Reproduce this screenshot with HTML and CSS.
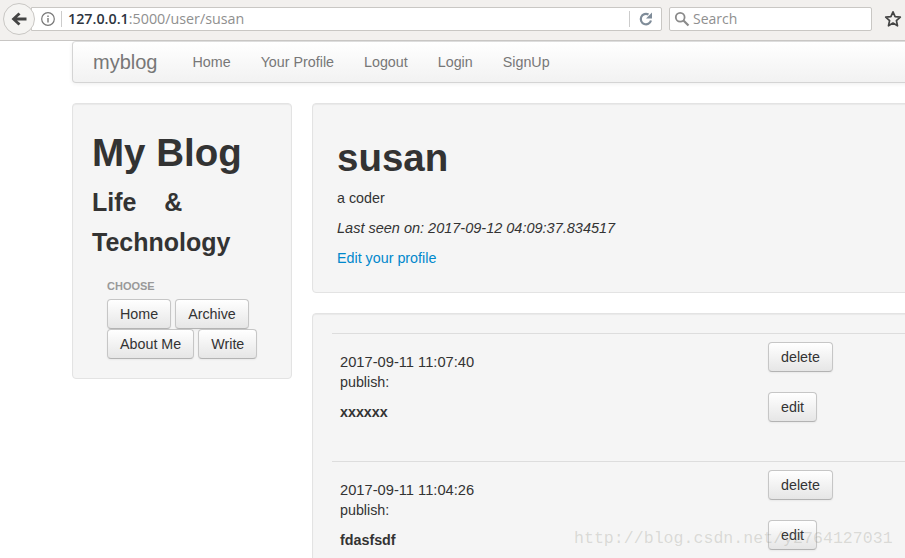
FILE: index.html
```html
<!DOCTYPE html>
<html lang="en">
<head>
<meta charset="utf-8">
<title>susan</title>
<link rel="stylesheet" href="styles.css">
</head>
<body>
<header class="chrome">
  <button class="back" aria-label="Back">
    <svg width="20" height="20" viewBox="0 0 20 20"><path d="M2.5 10 9.5 3.5 11.5 5.5 8 8.5H17.5V11.5H8L11.5 14.5 9.5 16.5Z" fill="#444"/></svg>
  </button>
  <div class="urlbar">
    <svg class="info" width="16" height="16" viewBox="0 0 16 16"><circle cx="8" cy="8" r="6.3" fill="none" stroke="#777" stroke-width="1.2"/><rect x="7.3" y="7" width="1.4" height="4.5" fill="#777"/><rect x="7.3" y="4.5" width="1.4" height="1.5" fill="#777"/></svg>
    <span class="sep"></span>
    <span class="url"><b>127.0.0.1</b>:5000/user/susan</span>
    <span class="sep sep-right"></span>
    <svg class="reload" width="16" height="16" viewBox="0 0 16 16"><path d="M13 9.5A5.2 5.2 0 1 1 10.5 3.5" fill="none" stroke="#7f8c99" stroke-width="2.2"/><path d="M14 1.5V7.5H8Z" fill="#7f8c99"/></svg>
  </div>
  <div class="searchbar">
    <svg width="16" height="16" viewBox="0 0 16 16"><circle cx="6.2" cy="6.2" r="4.4" fill="none" stroke="#8a8a8a" stroke-width="1.8"/><path d="M9.5 9.5 14.5 14.5" stroke="#8a8a8a" stroke-width="2.2"/></svg>
    <span>Search</span>
  </div>
  <svg class="star" width="18" height="18" viewBox="0 0 18 18"><path d="M9 1.8 11.1 6.6 16.3 7.1 12.4 10.6 13.5 15.8 9 13.1 4.5 15.8 5.6 10.6 1.7 7.1 6.9 6.6Z" fill="none" stroke="#444" stroke-width="1.7" stroke-linejoin="round"/></svg>
</header>

<div class="page">
  <nav class="navbar">
    <a class="brand" href="#">myblog</a>
    <a href="#">Home</a>
    <a href="#">Your Profile</a>
    <a href="#">Logout</a>
    <a href="#">Login</a>
    <a href="#">SignUp</a>
  </nav>

  <div class="columns">
    <aside class="well sidebar">
      <h1>My Blog</h1>
      <h3>Life &nbsp;&nbsp; &amp; Technology</h3>
      <div class="choose">
        <div class="nav-header">CHOOSE</div>
        <div class="btn-row">
          <a class="btn" href="#">Home</a>
          <a class="btn" href="#">Archive</a>
          <a class="btn" href="#">About Me</a>
          <a class="btn" href="#">Write</a>
        </div>
      </div>
    </aside>

    <main class="content">
      <section class="well profile">
        <h1>susan</h1>
        <p>a coder</p>
        <p class="seen"><em>Last seen on: 2017-09-12 04:09:37.834517</em></p>
        <p><a href="#">Edit your profile</a></p>
      </section>

      <section class="well posts">
        <article class="post">
          <div class="post-text">
            <div class="stamp">2017-09-11 11:07:40</div>
            <div>publish:</div>
            <p class="title">xxxxxx</p>
          </div>
          <div class="post-actions">
            <a class="btn" href="#">delete</a>
            <a class="btn" href="#">edit</a>
          </div>
        </article>
        <article class="post">
          <div class="post-text">
            <div class="stamp">2017-09-11 11:04:26</div>
            <div>publish:</div>
            <p class="title">fdasfsdf</p>
          </div>
          <div class="post-actions">
            <a class="btn" href="#">delete</a>
            <a class="btn" href="#">edit</a>
          </div>
        </article>
      </section>
    </main>
  </div>
</div>

<div class="watermark">http://blog.csdn.net/y2764127031</div>
</body>
</html>
```

FILE: styles.css
```css
* { box-sizing: border-box; }

html, body {
  height: 100%;
  overflow: hidden;
}

body {
  margin: 0;
  background: #fff;
  color: #333;
  font-family: "Liberation Sans", Arial, sans-serif;
  font-size: 14.3px;
  line-height: 20px;
}

a { text-decoration: none; }

.chrome {
  height: 41px;
  background: #f2f0ee;
  border-bottom: 1px solid #c8c6c4;
  display: flex;
  align-items: center;
  padding: 0 0 2px 3px;
  position: relative;
}

.back {
  width: 32px;
  height: 32px;
  border-radius: 50%;
  border: 1px solid #c9c7c4;
  background: #f5f4f2;
  padding: 0;
  display: flex;
  align-items: center;
  justify-content: center;
  z-index: 1;
  flex: none;
}

.urlbar {
  width: 631px;
  height: 24px;
  margin-left: -4px;
  background: #fff;
  border: 1px solid #c9c7c4;
  border-radius: 0 2px 2px 0;
  display: flex;
  align-items: center;
  padding-left: 8px;
  flex: none;
}

.info { flex: none; }

.sep {
  width: 1px;
  height: 16px;
  background: #ccc;
  margin: 0 6px 0 5px;
  flex: none;
}

.sep-right { margin: 0 8px 0 auto; }

.url {
  font-family: "Open Sans", "Noto Sans", sans-serif;
  font-size: 14.3px;
  color: #8f8f8f;
  white-space: nowrap;
}

.url b { font-weight: 600; color: #2c3440; }

.reload { margin-right: 7px; flex: none; }

.searchbar {
  width: 203px;
  height: 24px;
  margin-left: 7px;
  background: #fff;
  border: 1px solid #c9c7c4;
  border-radius: 2px;
  display: flex;
  align-items: center;
  gap: 3px;
  padding-left: 4px;
  font-family: "Open Sans", "Noto Sans", sans-serif;
  font-size: 14px;
  color: #8f8f8f;
  flex: none;
}

.star { margin-left: 12px; flex: none; }

.page {
  width: 1000px;
  margin-left: 72px;
}

.navbar {
  height: 42px;
  display: flex;
  align-items: center;
  padding-left: 20px;
  background: linear-gradient(#fff, #f2f2f2);
  border: 1px solid #d4d4d4;
  border-top-color: #ddd;
  border-radius: 4px;
  box-shadow: 0 1px 4px rgba(0, 0, 0, .065);
  gap: 30px;
  color: #777;
}

.navbar a { color: #777; white-space: nowrap; }

.navbar .brand {
  font-size: 20px;
  margin-right: 5px;
}

.columns {
  display: flex;
  align-items: flex-start;
  gap: 20px;
  margin-top: 20px;
}

.well {
  background: #f5f5f5;
  border: 1px solid #e3e3e3;
  border-radius: 4px;
  box-shadow: inset 0 1px 1px rgba(0, 0, 0, .05);
}

.sidebar {
  width: 220px;
  height: 276px;
  padding: 19px;
  flex: none;
}

.sidebar h1 {
  margin: 10px 0 0;
  font-size: 38.5px;
  line-height: 40px;
  font-weight: 700;
}

.sidebar h3 {
  margin: 9px 0 0;
  font-size: 25px;
  line-height: 40px;
  font-weight: 700;
}

.choose {
  margin-top: 14px;
  padding-left: 15px;
}

.nav-header {
  font-size: 11px;
  line-height: 20px;
  font-weight: 700;
  color: #999;
}

.btn-row {
  display: flex;
  flex-wrap: wrap;
  column-gap: 4px;
  margin-top: 3px;
}

.btn {
  display: inline-block;
  padding: 4px 12px;
  height: 30px;
  color: #333;
  background: linear-gradient(#fff, #e6e6e6);
  border: 1px solid #c6c6c6;
  border-bottom-color: #b3b3b3;
  border-radius: 4px;
  box-shadow: inset 0 1px 0 rgba(255, 255, 255, .2), 0 1px 2px rgba(0, 0, 0, .05);
  white-space: nowrap;
}

.content {
  width: 668px;
  flex: none;
}

.profile {
  height: 190px;
  padding: 29px 24px;
}

.profile h1 {
  margin: 0 0 6px;
  font-size: 38.5px;
  line-height: 49px;
  font-weight: 700;
}

.profile p { margin: 0 0 10px; }

.profile .seen { font-size: 14.5px; }

.profile a { color: #08c; }

.posts {
  margin-top: 20px;
  padding: 19px 19px 0;
}

.post {
  height: 128px;
  border-top: 1px solid #ddd;
  display: flex;
  padding: 8px 0 0 8px;
}

.post-text {
  width: 428px;
  padding-top: 10px;
}

.stamp { font-size: 14.7px; }

.title {
  margin: 10px 0 0;
  font-weight: 700;
}

.post-actions {
  display: flex;
  flex-direction: column;
  align-items: flex-start;
  gap: 20px;
}

.watermark {
  position: absolute;
  left: 574px;
  top: 529px;
  font-family: "Liberation Mono", monospace;
  font-size: 16.6px;
  line-height: 20px;
  color: rgba(150, 150, 140, .3);
  white-space: nowrap;
}
```
